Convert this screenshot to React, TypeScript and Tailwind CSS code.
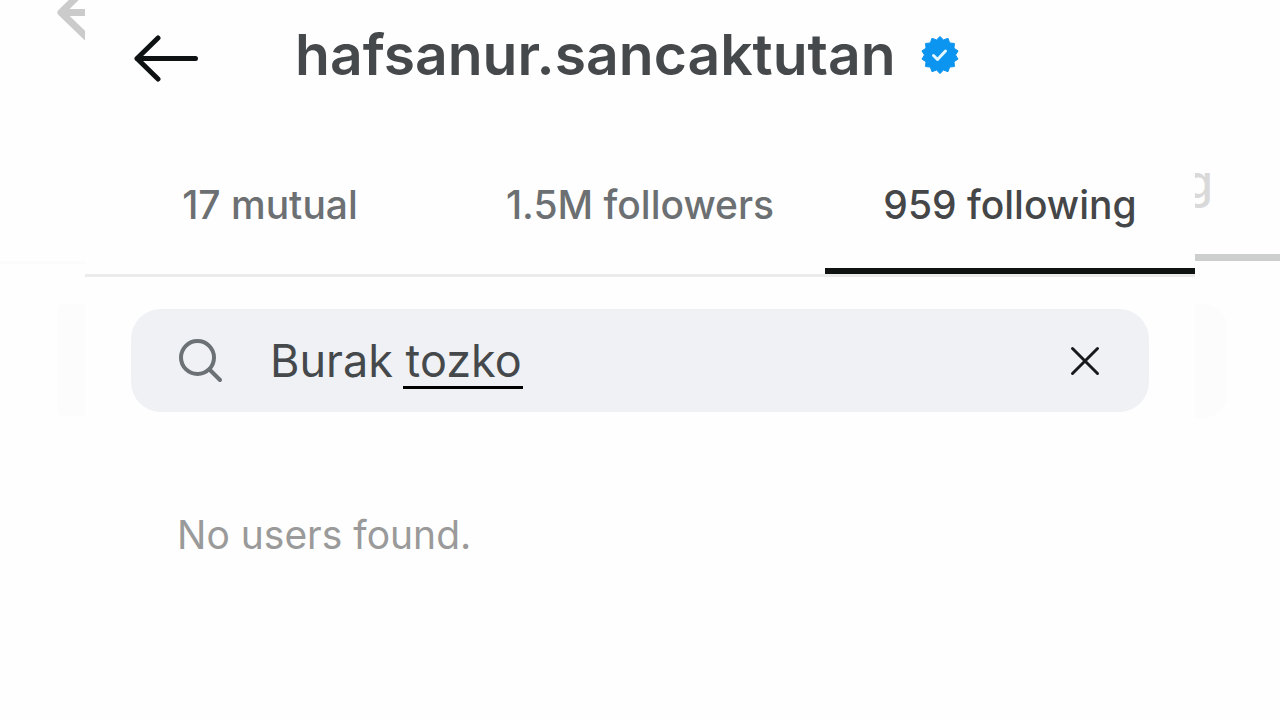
import { useState } from "react";

const tabs = [
  { id: "mutual", label: "17 mutual" },
  { id: "followers", label: "1.5M followers" },
  { id: "following", label: "959 following" },
];

// 14 outer and 14 inner points around the badge centre
const badgePoints = Array.from({ length: 28 }, (_, i) => {
  const r = i % 2 === 0 ? 18.5 : 15.5;
  const a = (i * Math.PI) / 14 - Math.PI / 2;
  return `${(20 + r * Math.cos(a)).toFixed(2)},${(20 + r * Math.sin(a)).toFixed(2)}`;
}).join(" ");

function VerifiedBadge() {
  return (
    <svg viewBox="0 0 40 40" className="size-10 shrink-0" role="img" aria-label="Verified">
      <polygon points={badgePoints} fill="#0c95f0" stroke="#0c95f0" strokeLinejoin="round" />
      <path
        d="M13.500 20.500l4 4 8-8.500"
        fill="none"
        stroke="#e4f6ff"
        strokeWidth="3"
        strokeLinecap="round"
        strokeLinejoin="round"
      />
    </svg>
  );
}

function LeftBackdrop() {
  return (
    <div aria-hidden="true" className="flex w-[85px] shrink-0 flex-col items-end overflow-hidden">
      <svg viewBox="0 0 30 40" className="h-10 w-[30px]" fill="none" stroke="#cbcbcb" strokeWidth="7">
        <path d="M32 -13L6 12.500l30 29M6 12.500h30" strokeLinejoin="round" />
      </svg>
      <div className="mt-[221px] h-[3px] w-full bg-[#fbfbfb]" />
      <div className="mt-10 h-[112px] w-7 rounded-l-lg bg-[#fcfcfc]" />
    </div>
  );
}

function RightBackdrop() {
  return (
    <div aria-hidden="true" className="flex w-[85px] shrink-0 flex-col overflow-hidden pt-[153px]">
      <div className="flex w-[18px] justify-end overflow-hidden text-[46px] leading-[56px] font-medium text-[#d9d9d9]">
        g
      </div>
      <div className="mt-[45px] h-[7px] bg-[#cdcfce]" />
      <div className="mt-[43px] h-[114px] w-8 rounded-r-3xl bg-[#fcfcfc]" />
    </div>
  );
}

export default function App() {
  const [active, setActive] = useState("following");
  const [query, setQuery] = useState("Burak tozko");

  return (
    <div className="flex min-h-screen bg-[#fefefe] font-['Inter',sans-serif]">
      <LeftBackdrop />

      <main className="min-w-0 flex-1 bg-[#fefefe]">
        <header className="flex h-[110px] items-center pl-12">
          <button type="button" aria-label="Back" className="mt-2 mr-24 cursor-pointer">
            <svg
              viewBox="0 0 66 48"
              className="h-12 w-[66px]"
              fill="none"
              stroke="#0f1213"
              strokeWidth="5"
              strokeLinecap="round"
              strokeLinejoin="round"
            >
              <path d="M25 3L4 23.500l21 20.500M4 23.500h58.500" />
            </svg>
          </button>
          <h1 className="mr-6 text-[57px] leading-[64px] font-semibold text-[#46494b]">
            hafsanur.sancaktutan
          </h1>
          <VerifiedBadge />
        </header>

        <nav role="tablist" className="grid grid-cols-3 border-b-3 border-[#ebebeb]">
          {tabs.map((tab) => (
            <button
              key={tab.id}
              type="button"
              role="tab"
              aria-selected={active === tab.id}
              onClick={() => setActive(tab.id)}
              className={`h-[164px] cursor-pointer border-b-6 pt-8 text-[39px] leading-10 font-medium whitespace-nowrap ${
                active === tab.id
                  ? "border-[#0f1412] text-[#444648]"
                  : "border-transparent text-[#6c7072]"
              }`}
            >
              {tab.label}
            </button>
          ))}
        </nav>

        <div className="mx-[46px] mt-8 flex h-[103px] items-center rounded-[30px] bg-[#eff1f5] px-12 pt-px">
          <svg
            viewBox="0 0 44 44"
            className="size-11 shrink-0"
            fill="none"
            stroke="#6b7174"
            strokeWidth="4"
            strokeLinecap="round"
          >
            <circle cx="18.500" cy="18.500" r="16.500" />
            <path d="M30.500 30.500L41 41" />
          </svg>
          <div className="relative ml-[47px] min-w-0 flex-1">
            <input
              type="text"
              aria-label="Search"
              spellCheck={false}
              value={query}
              onChange={(e) => setQuery(e.target.value)}
              className="block w-full bg-transparent text-[45px] leading-[56px] text-[#45494c] outline-none"
            />
            {query === "Burak tozko" && (
              <span className="absolute bottom-0 left-[133px] h-[3px] w-[120px] bg-black" />
            )}
          </div>
          <button type="button" aria-label="Clear" onClick={() => setQuery("")} className="cursor-pointer">
            <svg
              viewBox="0 0 32 32"
              className="size-8"
              fill="none"
              stroke="#17191b"
              strokeWidth="3"
              strokeLinecap="round"
            >
              <path d="M3.500 3.500l25 25M28.500 3.500l-25 25" />
            </svg>
          </button>
        </div>

        <p className="mt-[99px] px-[92px] text-[39px] leading-12 text-[#9a9a9a]">No users found.</p>
      </main>

      <RightBackdrop />
    </div>
  );
}
